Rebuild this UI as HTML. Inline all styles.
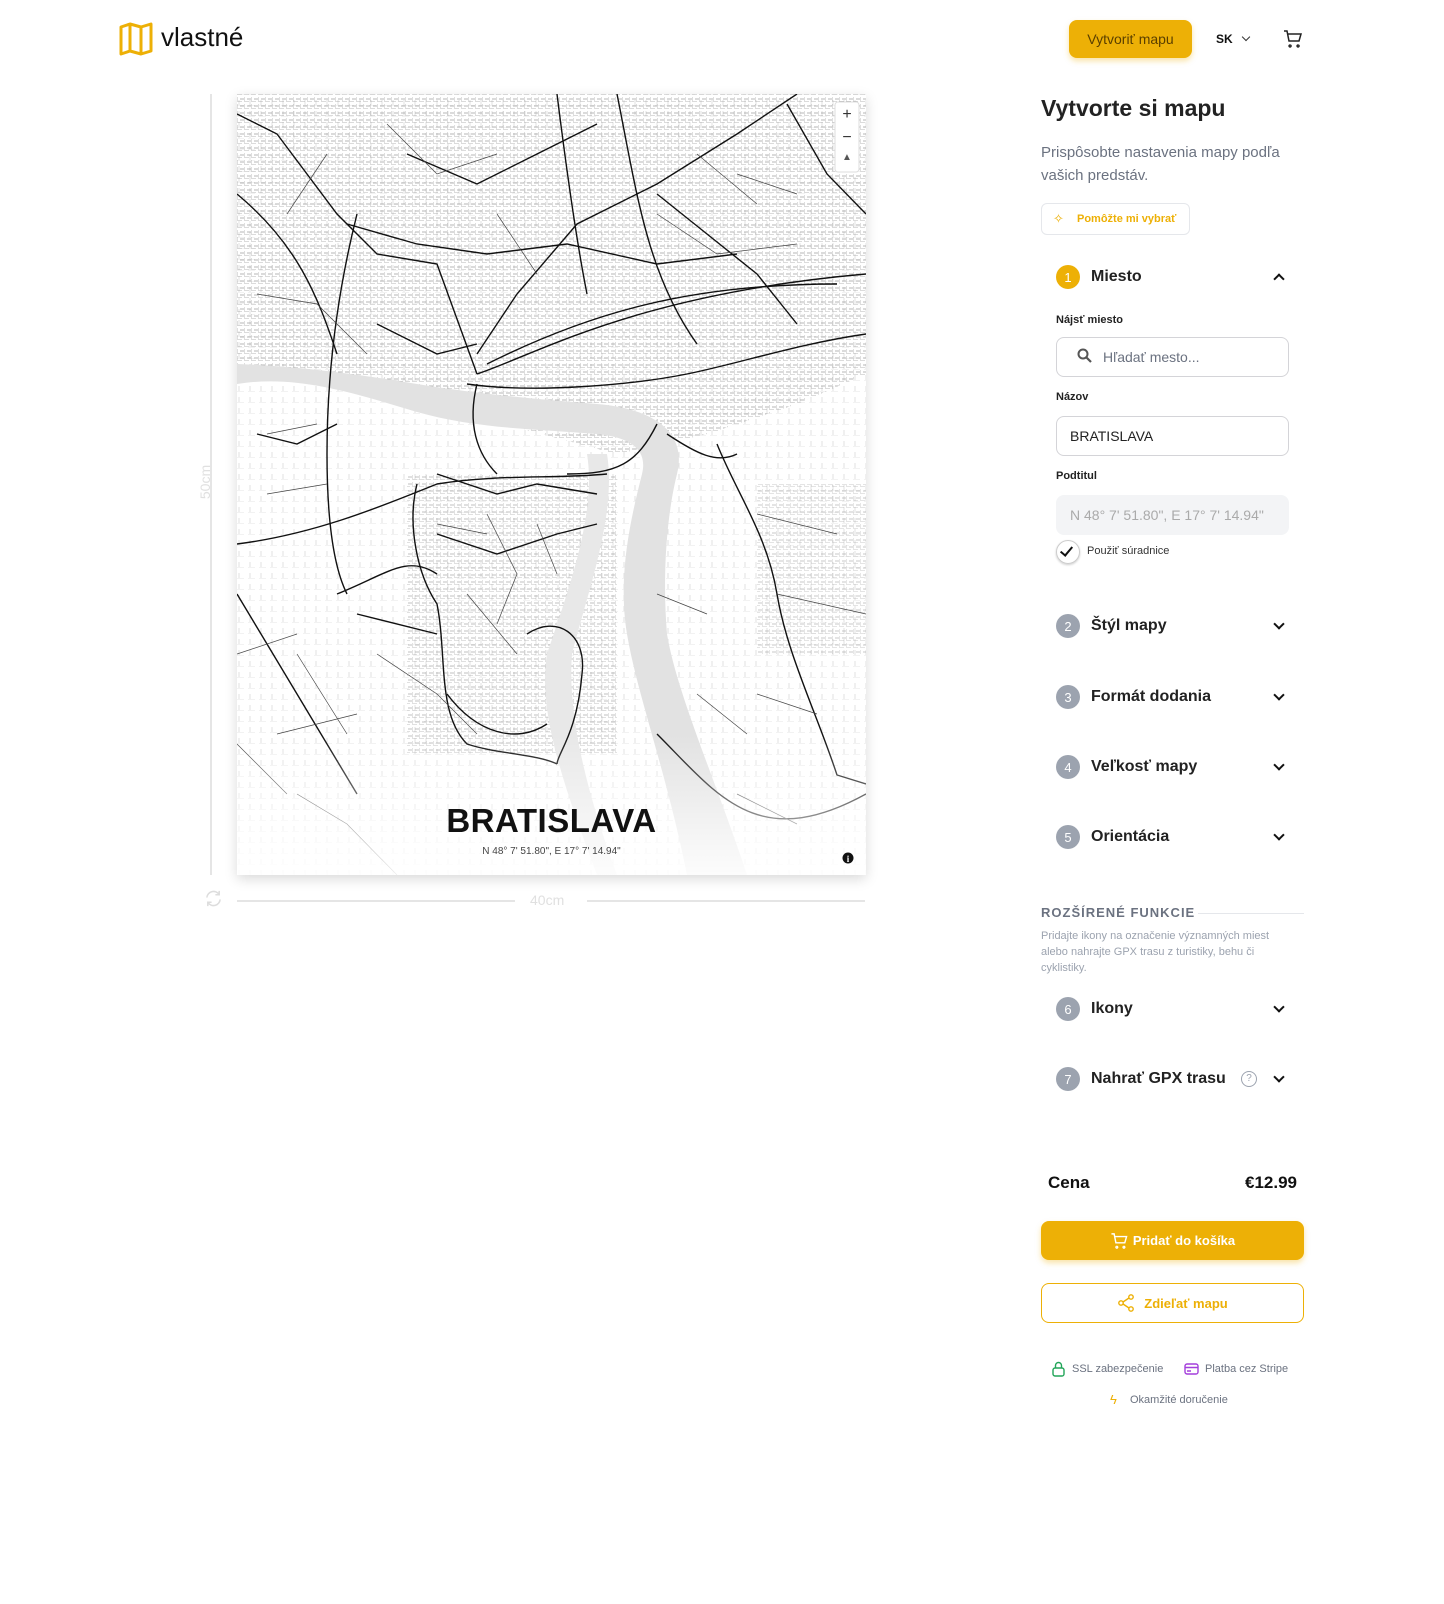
<!DOCTYPE html>
<html><head><meta charset="utf-8">
<style>
*{box-sizing:border-box;margin:0;padding:0}
body{width:1444px;height:1604px;background:#fff;font-family:"Liberation Sans",sans-serif;color:#111;position:relative;overflow:hidden}
.a{position:absolute}
.btn{background:#edb006;border-radius:8px;color:#5a3f00;font-size:14px;display:flex;align-items:center;justify-content:center;box-shadow:0 3px 6px rgba(237,176,6,.35)}
.lbl{font-size:11px;font-weight:bold;color:#222}
.inp{border:1px solid #d4d4d8;border-radius:8px;height:40px;width:233px;display:flex;align-items:center;padding-left:13px;font-size:14px}
.num{width:24px;height:24px;border-radius:50%;background:#9ca3af;color:#fff;font-size:13px;display:flex;align-items:center;justify-content:center}
.sec{left:1056px;width:233px;height:24px;display:flex;align-items:center}
.sec .t{margin-left:11px;font-size:16px;font-weight:bold;color:#222;flex:1}
.chev{width:8px;height:8px;border-right:2px solid #111;border-bottom:2px solid #111;transform:rotate(45deg);margin-right:6px;margin-top:-4px}
</style></head><body>
<svg class="a" style="left:119px;top:22px" width="34" height="34" viewBox="0 0 34 34"><path d="M2 5 L11 2 L22 5 L32 2 L32 29 L22 32 L11 29 L2 32 Z M11 2 L11 29 M22 5 L22 32" fill="none" stroke="#edb006" stroke-width="3" stroke-linejoin="round"/></svg>
<div class="a" style="left:161px;top:22px;font-size:26px;color:#111">vlastné</div>
<div class="a btn" style="left:1069px;top:20px;width:123px;height:38px">Vytvoriť mapu</div>
<div class="a" style="left:1216px;top:32px;font-size:12px;font-weight:bold">SK</div>
<div class="a" style="left:1243px;top:34px;width:6px;height:6px;border-right:1px solid #333;border-bottom:1px solid #333;transform:rotate(45deg)"></div>
<svg class="a" style="left:1283px;top:30px" width="19" height="18" viewBox="0 0 19 18"><path d="M1 1h3l2 10h10l2-7H5M7 15a1 1 0 1 0 .1 0M15 15a1 1 0 1 0 .1 0" fill="none" stroke="#222" stroke-width="1.5"/></svg>

<div class="a" style="left:210px;top:94px;width:2px;height:781px;background:#e5e5e5"></div>
<div class="a" style="left:188px;top:474px;transform:rotate(-90deg);font-size:14px;color:#e0e0e0">50cm</div>
<div class="a" style="left:237px;top:900px;width:278px;height:2px;background:#e5e5e5"></div>
<div class="a" style="left:587px;top:900px;width:278px;height:2px;background:#e5e5e5"></div>
<div class="a" style="left:530px;top:892px;font-size:14px;color:#e0e0e0">40cm</div>
<svg class="a" style="left:204px;top:889px" width="19" height="19" viewBox="0 0 20 20"><path d="M3 9a7 7 0 0 1 13-3M17 11a7 7 0 0 1-13 3M16 2v4h-4M4 18v-4h4" fill="none" stroke="#ddd" stroke-width="1.6"/></svg>

<div class="a" style="left:237px;top:94px;width:629px;height:781px;box-shadow:0 4px 12px rgba(0,0,0,.15);background:#fff;overflow:hidden">
<svg width="629" height="781" viewBox="0 0 629 781">
<defs><pattern id="h" width="7" height="7" patternUnits="userSpaceOnUse"><path d="M0 0h5M0 3v4M3 5h4" stroke="#888" stroke-width="0.7"/></pattern>
<pattern id="h2" width="11" height="11" patternUnits="userSpaceOnUse"><path d="M0 0h7M2 6v5" stroke="#ccc" stroke-width="0.6"/></pattern>
<linearGradient id="fade" x1="0" y1="0" x2="0" y2="1"><stop offset="0.82" stop-color="#fff" stop-opacity="0"/><stop offset="1" stop-color="#fff" stop-opacity=".9"/></linearGradient></defs>
<rect width="629" height="781" fill="url(#h2)"/>
<path d="M0 0H629V280L560 310 470 340 380 360 230 320 150 300 0 280Z" fill="url(#h)" opacity=".8"/>
<path d="M170 380H380V660H170Z" fill="url(#h)" opacity=".7"/>
<path d="M520 390H629V560H520Z" fill="url(#h)" opacity=".6"/>
<path d="M0 290 C60 280 120 300 180 318 C240 335 300 335 360 340 C400 344 410 360 405 380 C395 420 380 480 390 540 C400 600 430 680 450 781 L510 781 C480 690 440 600 430 540 C425 480 430 420 440 380 C450 340 420 315 360 310 C300 305 240 300 180 290 C120 280 60 272 0 270Z" fill="#e2e2e2"/>
<path d="M350 360 C360 420 330 500 310 560 C300 620 330 700 360 781 L380 781 C350 700 330 620 335 560 C350 500 380 420 370 360Z" fill="#e8e8e8"/>
<g fill="none" stroke="#111" stroke-width="1.4">
<path d="M0 20 L40 40 L100 120 L140 160 L200 170 L240 280"/>
<path d="M120 120 C100 200 90 280 90 360 C90 440 100 480 110 500"/>
<path d="M240 260 L280 200 L340 130 L420 90 L500 40 L560 0"/>
<path d="M240 280 C300 260 400 200 629 180"/>
<path d="M250 270 C350 220 450 190 600 190"/>
<path d="M230 290 C300 300 400 290 450 280 C500 270 560 250 629 240"/>
<path d="M240 290 C230 330 240 360 260 380"/>
<path d="M0 450 C80 440 150 410 200 390 C260 380 320 385 370 380"/>
<path d="M180 390 C170 430 180 480 200 510 C210 560 200 620 230 650 C260 660 300 660 320 670"/>
<path d="M330 380 C380 380 400 370 420 330"/>
<path d="M100 500 C150 480 170 460 200 480"/>
<path d="M120 520 L200 540"/>
<path d="M290 540 C320 520 350 540 345 580 C340 640 320 660 320 670"/>
<path d="M480 350 C500 400 530 440 540 500 C550 560 580 620 600 681 L629 690"/>
<path d="M420 640 C480 700 520 760 629 700"/>
<path d="M0 500 L60 600 L120 700"/>
<path d="M320 0 C330 80 340 150 350 200"/>
<path d="M380 0 C400 100 410 180 460 250"/>
<path d="M550 10 L590 80 L629 120"/>
<path d="M0 100 C60 150 80 200 100 260"/>
<path d="M200 380 L260 400 L300 390 L360 400"/>
<path d="M430 340 C460 360 480 370 500 360"/>
<path d="M110 130 L180 150 L250 160 L330 150 L420 170 L500 160"/>
<path d="M170 60 L240 90 L300 60 L360 30"/>
<path d="M420 100 L470 140 L520 180 L560 230"/>
<path d="M140 230 L200 260 L240 250"/>
<path d="M20 340 L60 350 L100 330"/>
<path d="M200 440 L260 460 L320 440 L360 430"/>
<path d="M210 600 C240 640 280 650 310 630"/>
</g>
<g fill="none" stroke="#444" stroke-width=".7">
<path d="M20 200 L80 210 L130 260M30 340 L80 330M150 30 L200 80 L260 60M420 120 L480 160 L560 150M500 80 L560 100M140 560 L200 600 L240 640M40 640 L120 620M520 420 L600 440M540 500 L629 520M0 560 L60 540M420 500 L470 520M460 600 L510 640M250 420 L280 480 L260 530M300 430 L320 480M200 430 L250 440M60 700 L110 730 L160 781M500 700 L560 730M50 120 L90 60M260 120 L300 180M460 60 L520 110M30 400 L90 390M230 500 L280 560M520 600 L580 620M60 560 L110 640M0 650 L50 700"/>
</g>
<rect width="629" height="781" fill="url(#fade)"/>
<rect x="598" y="8" width="24" height="70" rx="3" fill="#fff" stroke="#ddd"/>
<text x="610" y="25" font-size="16" text-anchor="middle" fill="#333" font-family="Liberation Sans">+</text>
<text x="610" y="48" font-size="16" text-anchor="middle" fill="#333" font-family="Liberation Sans">−</text>
<text x="610" y="66" font-size="10" text-anchor="middle" fill="#555">▲</text>
<circle cx="611" cy="764" r="5.5" fill="#111"/><text x="611" y="768" font-size="9" fill="#fff" text-anchor="middle" font-weight="bold" font-family="Liberation Serif">i</text>
</svg>
<div class="a" style="left:0;width:629px;top:708px;text-align:center;font-size:33px;font-weight:bold;letter-spacing:0.5px">BRATISLAVA</div>
<div class="a" style="left:0;width:629px;top:752px;text-align:center;font-size:10px;color:#444">N 48° 7' 51.80", E 17° 7' 14.94"</div>
</div>

<div class="a" style="left:1041px;top:95px;font-size:23px;font-weight:bold;color:#222">Vytvorte si mapu</div>
<div class="a" style="left:1041px;top:141px;width:260px;font-size:15px;line-height:23px;color:#6b7280">Prispôsobte nastavenia mapy podľa vašich predstáv.</div>
<div class="a" style="left:1041px;top:203px;width:149px;height:32px;border:1px solid #e5e7eb;border-radius:6px;font-size:11px;color:#edb006;font-weight:bold;display:flex;align-items:center;padding-left:35px">Pomôžte mi vybrať</div>
<div class="a" style="left:1053px;top:211px;color:#edb006;font-size:13px">✧</div>

<div class="a sec" style="top:265px"><div class="num" style="background:#edb006">1</div><div class="t">Miesto</div><div class="chev" style="transform:rotate(225deg);margin-top:4px"></div></div>
<div class="a lbl" style="left:1056px;top:314px">Nájsť miesto</div>
<div class="a inp" style="left:1056px;top:337px;padding-left:46px;color:#6b7280">Hľadať mesto...</div>
<svg class="a" style="left:1077px;top:348px" width="16" height="16" viewBox="0 0 16 16"><circle cx="6" cy="6" r="4.5" fill="none" stroke="#555" stroke-width="2"/><path d="M9.5 9.5L14 14" stroke="#555" stroke-width="2.2"/></svg>
<div class="a lbl" style="left:1056px;top:391px">Názov</div>
<div class="a inp" style="left:1056px;top:416px;color:#222">BRATISLAVA</div>
<div class="a lbl" style="left:1056px;top:470px">Podtitul</div>
<div class="a inp" style="left:1056px;top:495px;background:#f3f4f6;border-color:#f3f4f6;color:#aaa">N 48° 7' 51.80", E 17° 7' 14.94"</div>
<div class="a" style="left:1056px;top:540px;width:24px;height:24px;border:1px solid #ccc;border-radius:50%;box-shadow:0 1px 2px rgba(0,0,0,.2)"></div>
<div class="a" style="left:1063px;top:544px;width:7px;height:12px;border-right:2px solid #111;border-bottom:2px solid #111;transform:rotate(40deg)"></div>
<div class="a" style="left:1087px;top:545px;font-size:11px;color:#333">Použiť súradnice</div>

<div class="a sec" style="top:614px"><div class="num">2</div><div class="t">Štýl mapy</div><div class="chev"></div></div>
<div class="a sec" style="top:685px"><div class="num">3</div><div class="t">Formát dodania</div><div class="chev"></div></div>
<div class="a sec" style="top:755px"><div class="num">4</div><div class="t">Veľkosť mapy</div><div class="chev"></div></div>
<div class="a sec" style="top:825px"><div class="num">5</div><div class="t">Orientácia</div><div class="chev"></div></div>

<div class="a" style="left:1041px;top:905px;font-size:13px;letter-spacing:1px;color:#6b7280;font-weight:bold">ROZŠÍRENÉ FUNKCIE</div>
<div class="a" style="left:1198px;top:913px;width:106px;height:1px;background:#e5e7eb"></div>
<div class="a" style="left:1041px;top:928px;width:248px;font-size:11px;line-height:16px;color:#9ca3af">Pridajte ikony na označenie významných miest alebo nahrajte GPX trasu z turistiky, behu či cyklistiky.</div>
<div class="a sec" style="top:997px"><div class="num">6</div><div class="t">Ikony</div><div class="chev"></div></div>
<div class="a sec" style="top:1067px"><div class="num">7</div><div class="t" style="flex:none">Nahrať GPX trasu</div><div style="flex:1"></div><div style="width:16px;height:16px;border:1px solid #9ca3af;border-radius:50%;font-size:10px;color:#9ca3af;text-align:center;line-height:14px;margin-right:18px">?</div><div class="chev"></div></div>

<div class="a" style="left:1048px;top:1173px;font-size:17px;font-weight:bold">Cena</div>
<div class="a" style="left:1220px;width:77px;text-align:right;top:1173px;font-size:17px;font-weight:bold">€12.99</div>
<div class="a btn" style="left:1041px;top:1221px;width:263px;height:39px;color:#fff;font-weight:bold;font-size:13px">
<svg width="18" height="16" viewBox="0 0 19 18" style="margin-right:5px"><path d="M1 1h3l2 10h10l2-7H5M7 15a1 1 0 1 0 .1 0M15 15a1 1 0 1 0 .1 0" fill="none" stroke="#fff" stroke-width="1.6"/></svg>Pridať do košíka</div>
<div class="a" style="left:1041px;top:1283px;width:263px;height:40px;border:1px solid #edb006;border-radius:8px;display:flex;align-items:center;justify-content:center;color:#edb006;font-weight:bold;font-size:13px">
<svg width="18" height="18" viewBox="0 0 18 18" style="margin-right:9px"><circle cx="4" cy="9" r="2.2" fill="none" stroke="#edb006" stroke-width="1.4"/><circle cx="14" cy="3" r="2.2" fill="none" stroke="#edb006" stroke-width="1.4"/><circle cx="14" cy="15" r="2.2" fill="none" stroke="#edb006" stroke-width="1.4"/><path d="M6 8l6-4M6 10l6 4" stroke="#edb006" stroke-width="1.4"/></svg>Zdieľať mapu</div>
<svg class="a" style="left:1052px;top:1361px" width="13" height="16" viewBox="0 0 13 16"><rect x="1" y="7" width="11" height="8" rx="2" fill="none" stroke="#22a559" stroke-width="1.4"/><path d="M3.5 7V4.5a3 3 0 0 1 6 0V7" fill="none" stroke="#22a559" stroke-width="1.4"/></svg>
<div class="a" style="left:1072px;top:1363px;font-size:11px;color:#6b7280">SSL zabezpečenie</div>
<svg class="a" style="left:1184px;top:1363px" width="15" height="12" viewBox="0 0 15 12"><rect x="1" y="1" width="13" height="10" rx="2" fill="none" stroke="#a43fdc" stroke-width="1.4"/><path d="M1 4.5h13M3 8h4" stroke="#a43fdc" stroke-width="1.4"/></svg>
<div class="a" style="left:1205px;top:1363px;font-size:11px;color:#6b7280">Platba cez Stripe</div>
<div class="a" style="left:1110px;top:1392px;font-size:13px;color:#edb006">ϟ</div>
<div class="a" style="left:1130px;top:1394px;font-size:11px;color:#6b7280">Okamžité doručenie</div>
</body></html>
